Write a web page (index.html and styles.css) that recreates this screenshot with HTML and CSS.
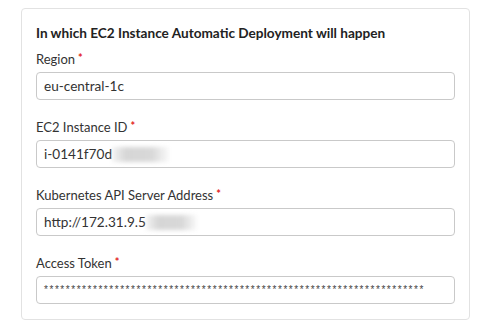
FILE: index.html
```html
<!DOCTYPE html>
<html>
<head>
<meta charset="utf-8">
<link rel="stylesheet" href="styles.css">
</head>
<body>
<div class="card">
  <div class="title">In which EC2 Instance Automatic Deployment will happen</div>
  <div class="field">
    <div class="label">Region<span class="req">*</span></div>
    <div class="input">eu-central-1c</div>
  </div>
  <div class="field">
    <div class="label">EC2 Instance ID<span class="req">*</span></div>
    <div class="input">i-0141f70d<span class="blur b1"></span></div>
  </div>
  <div class="field">
    <div class="label">Kubernetes API Server Address<span class="req">*</span></div>
    <div class="input">http://172.31.9.5<span class="blur b2"></span></div>
  </div>
  <div class="field">
    <div class="label">Access Token<span class="req">*</span></div>
    <div class="input"><span class="stars">**********************************************************************</span></div>
  </div>
</div>
</body>
</html>
```
FILE: styles.css
```css
html, body {
  margin: 0;
  padding: 0;
  background: #fff;
}
body {
  font-family: Lato, "Noto Sans", sans-serif;
  color: #333;
  padding: 8px 0 0 21px;
}
.card {
  width: 419px;
  border: 1px solid #e2e2e2;
  border-radius: 4px;
  padding: 15px 14px 15px 14px;
}
.title {
  font-size: 13.6px;
  font-weight: bold;
  line-height: 18px;
  color: #222;
  margin-bottom: 8px;
}
.field + .field {
  margin-top: 18px;
}
.label {
  font-size: 13px;
  line-height: 18px;
  margin-bottom: 4px;
  color: #333;
}
.req {
  color: #e31c1c;
  font-size: 11px;
  font-weight: bold;
  vertical-align: top;
  line-height: 15px;
  margin-left: 3px;
}
.input {
  box-sizing: border-box;
  height: 28px;
  border: 1px solid #c9c9c9;
  border-radius: 4px;
  padding: 0 7px;
  font-size: 13.6px;
  line-height: 26px;
  color: #333;
  display: flex;
  align-items: center;
  white-space: nowrap;
  overflow: hidden;
}
.blur {
  display: inline-block;
  height: 15px;
  background: linear-gradient(90deg, rgba(215,215,215,0.3), #d6d6d6 25%, #d8d8d8 70%, rgba(230,230,230,0.2));
  filter: blur(2px);
}
.b1 { width: 57px; }
.b2 { width: 51px; }
.stars {
  font-family: "Liberation Sans", sans-serif;
  font-size: 10px;
  letter-spacing: 1.55px;
  color: #444;
}
```
